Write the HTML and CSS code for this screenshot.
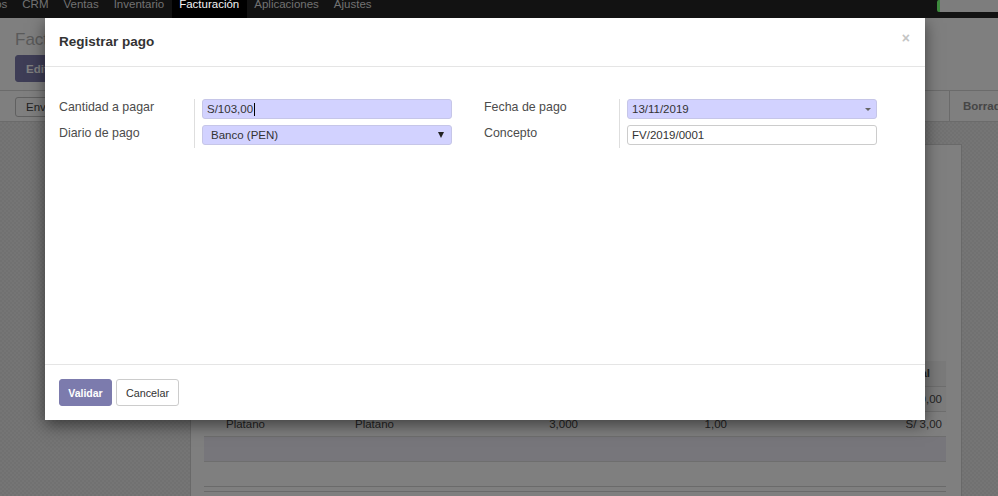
FILE: index.html
```html
<!DOCTYPE html>
<html lang="es">
<head>
<meta charset="utf-8">
<title>Registrar pago</title>
<link rel="stylesheet" href="styles.css">
</head>
<body>
<div class="app">
  <header class="navbar">
    <ul class="menu">
      <li class="menu-item">Contactos</li>
      <li class="menu-item">CRM</li>
      <li class="menu-item">Ventas</li>
      <li class="menu-item">Inventario</li>
      <li class="menu-item active">Facturación</li>
      <li class="menu-item">Aplicaciones</li>
      <li class="menu-item">Ajustes</li>
    </ul>
    <div class="systray"><div class="sys-search"></div></div>
  </header>

  <main class="action">
    <div class="control-panel">
      <div class="breadcrumb">Facturas de cliente / FV/2019/0001</div>
      <div class="cp-buttons">
        <button class="btn btn-edit">Editar</button>
        <button class="btn btn-create">Crear</button>
      </div>
    </div>
    <div class="statusbar">
      <div class="sb-buttons">
        <button class="btn btn-sm">Enviar por correo electrónico</button>
        <button class="btn btn-sm">Imprimir</button>
      </div>
      <div class="sb-status">
        <span class="status">Borrador</span>
        <span class="status">Abierto</span>
        <span class="status">Pagado</span>
      </div>
    </div>
    <div class="form-bg">
      <div class="sheet">
        <div class="sheet-top">
          <div class="sheet-title">Factura FV/2019/0001</div>
          <div class="sheet-field">Cliente: Cliente Demo</div>
          <div class="sheet-field">Fecha factura: 13/11/2019</div>
        </div>
        <table class="lines">
          <colgroup>
            <col class="c-handle"><col class="c-prod"><col class="c-desc"><col class="c-qty"><col class="c-price"><col class="c-tax"><col class="c-sub">
          </colgroup>
          <thead>
            <tr><th></th><th class="left">Producto</th><th class="left">Descripción</th><th>Cantidad</th><th>Precio unitario</th><th>Impuestos</th><th class="th-sub">Subtotal</th></tr>
          </thead>
          <tbody>
            <tr class="striped"><td></td><td>Manzana</td><td>Manzana</td><td class="num">100,000</td><td class="num">1,00</td><td></td><td class="num">S/ 100,00</td></tr>
            <tr><td></td><td>Platano</td><td>Platano</td><td class="num">3,000</td><td class="num">1,00</td><td></td><td class="num">S/ 3,00</td></tr>
            <tr class="add-row"><td colspan="7">&nbsp;</td></tr>
            <tr><td colspan="7">&nbsp;</td></tr>
          </tbody>
          <tfoot>
            <tr><td colspan="7"><div class="foot-gap"></div></td></tr>
          </tfoot>
        </table>
      </div>
    </div>
  </main>

  <div class="backdrop"></div>

  <div class="modal" role="dialog">
    <div class="modal-header">
      <h4 class="modal-title">Registrar pago</h4>
      <button class="close" aria-label="Cerrar">×</button>
    </div>
    <div class="modal-body">
      <div class="groups">
        <div class="group">
          <label class="o-label">Cantidad a pagar</label>
          <div class="o-field"><div class="o-input required">S/103,00<span class="cursor"></span></div></div>
          <label class="o-label">Diario de pago</label>
          <div class="o-field"><div class="o-input required o-select">Banco (PEN)<span class="select-arrow"></span></div></div>
        </div>
        <div class="group">
          <label class="o-label">Fecha de pago</label>
          <div class="o-field"><div class="o-input required o-date">13/11/2019<span class="date-caret"></span></div></div>
          <label class="o-label">Concepto</label>
          <div class="o-field"><div class="o-input">FV/2019/0001</div></div>
        </div>
      </div>
    </div>
    <div class="modal-footer">
      <button class="btn btn-validate">Validar</button>
      <button class="btn btn-cancel">Cancelar</button>
    </div>
  </div>
</div>
</body>
</html>
```

FILE: styles.css
```css
* { box-sizing: border-box; }

body {
  margin: 0;
  font-family: "Liberation Sans", Arial, sans-serif;
  overflow: hidden;
}

.app {
  position: relative;
  width: 998px;
  height: 496px;
  overflow: hidden;
  background: #fff;
  display: flex;
  flex-direction: column;
}

/* ---------- navbar ---------- */
.navbar {
  position: relative;
  z-index: 3;
  flex: 0 0 18px;
  height: 18px;
  background: #121212;
  display: flex;
  overflow: hidden;
}
.menu {
  display: flex;
  margin: 0 0 0 -52px;
  padding: 0;
  list-style: none;
}
.menu-item {
  padding: 0 7.5px;
  font-size: 11.5px;
  line-height: 9px;
  color: #727272;
  white-space: nowrap;
}
.menu-item.active {
  background: #000;
  color: #f2f2f2;
}
.systray { margin-left: auto; }
.sys-search {
  width: 61px;
  height: 12px;
  background: #7d7d7d;
  border-left: 3px solid #3d8a3d;
  border-radius: 2px 0 0 2px;
}

/* ---------- page under the dialog ---------- */
.action {
  flex: 1;
  display: flex;
  flex-direction: column;
  min-height: 0;
}
.control-panel {
  background: #fff;
  padding: 12px 15px 8px;
  border-bottom: 1px solid #d6d6d6;
}
.breadcrumb {
  font-size: 17px;
  line-height: 20px;
  color: #b4b4b4;
  white-space: nowrap;
}
.cp-buttons {
  margin-top: 5px;
  display: flex;
  gap: 4px;
}
.btn {
  font-family: inherit;
  border-radius: 3px;
  cursor: pointer;
  white-space: nowrap;
}
.btn-edit {
  height: 27px;
  padding: 0 10px;
  background: #7c7bad;
  border: 1px solid #7c7bad;
  color: #fff;
  font-size: 11.5px;
  font-weight: bold;
}
.btn-create {
  height: 27px;
  padding: 0 10px;
  background: #fff;
  border: 1px solid #ccc;
  color: #444;
  font-size: 11.5px;
}
.statusbar {
  display: flex;
  height: 31px;
  background: #fff;
  border-bottom: 1px solid #d6d6d6;
}
.sb-buttons {
  flex: 1;
  display: flex;
  align-items: flex-start;
  gap: 4px;
  padding: 6px 0 0 15px;
  overflow: hidden;
}
.btn-sm {
  height: 20px;
  padding: 0 10px;
  font-size: 11.5px;
  background: #fff;
  border: 1px solid #c0c0c0;
  color: #444;
}
.sb-status {
  flex: 0 0 49px;
  display: flex;
  overflow: hidden;
}
.status {
  border-left: 1px solid #d4d4d4;
  padding: 0 14px 0 13px;
  line-height: 30px;
  font-size: 11.5px;
  font-weight: bold;
  color: #8c8c8c;
  white-space: nowrap;
}
.form-bg {
  flex: 1;
  min-height: 0;
  overflow: hidden;
  padding: 22px 36px 0 190px;
  background-color: #e7e7e7;
  background-image: repeating-conic-gradient(#e2e2e2 0 25%, #ebebeb 0 50%);
  background-size: 4px 4px;
}
.sheet {
  height: 100%;
  background: #fff;
  border: 1px solid #d2d2d2;
  border-bottom: 0;
  padding: 0 15px 0 13px;
}
.sheet-top {
  height: 216px;
  padding: 20px 0 0 20px;
  color: #666;
  font-size: 11.5px;
  overflow: hidden;
}
.sheet-title {
  font-size: 20px;
  margin-bottom: 16px;
}
.sheet-field { margin-bottom: 6px; }

.lines {
  width: 100%;
  table-layout: fixed;
  border-collapse: separate;
  border-spacing: 0;
  font-size: 11.5px;
  color: #4a4a4a;
}
.c-handle { width: 18px; }
.c-prod { width: 129px; }
.c-desc { width: 129px; }
.c-qty { width: 102px; }
.c-price { width: 149px; }
.c-tax { width: 115px; }
.c-sub { width: 100px; }
.lines th {
  background: #f4f4f4;
  line-height: 25px;
  padding: 0 4px;
  text-align: right;
  font-weight: bold;
  color: #444;
  white-space: nowrap;
  overflow: hidden;
}
.lines th.left { text-align: left; }
.lines th.th-sub { padding-right: 16px; }
.lines td {
  line-height: 24px;
  padding: 0 4px;
  border-top: 1px solid #dcdcdc;
  white-space: nowrap;
  overflow: hidden;
}
.lines td.num { text-align: right; }
.lines tr.striped td { background: #f8f8f8; }
.lines tr.add-row td { background: #eeecf6; }
.lines tfoot td {
  padding: 0;
  line-height: 0;
  border-top: 1px solid #d4d4d4;
  border-bottom: 1px solid #d4d4d4;
}
.foot-gap { height: 4px; }

/* ---------- backdrop + dialog ---------- */
.backdrop {
  position: absolute;
  inset: 0;
  z-index: 1;
  background: rgba(0, 0, 0, 0.5);
}
.modal {
  position: absolute;
  z-index: 2;
  left: 45px;
  top: 18px;
  width: 880px;
  height: 402px;
  background: #fff;
  display: flex;
  flex-direction: column;
  box-shadow: 0 5px 15px rgba(0, 0, 0, 0.5);
}
.modal-header {
  flex: 0 0 49px;
  display: flex;
  align-items: center;
  padding: 0 15px 1px 14px;
  border-bottom: 1px solid #e5e5e5;
}
.modal-title {
  margin: 0;
  font-size: 13.5px;
  line-height: 16px;
  font-weight: bold;
  color: #333;
}
.close {
  margin-left: auto;
  align-self: flex-start;
  margin-top: 13px;
  padding: 0;
  border: 0;
  background: none;
  font-family: inherit;
  font-size: 14px;
  line-height: 14px;
  font-weight: bold;
  color: #c4c4c4;
  cursor: pointer;
}
.modal-body {
  flex: 1;
  padding: 32px 17px 0 14px;
}
.groups {
  display: grid;
  grid-template-columns: 393px 393px;
  column-gap: 32px;
}
.group {
  display: grid;
  grid-template-columns: 135px 258px;
}
.o-label {
  font-size: 12.4px;
  line-height: 17px;
  color: #4c4c4c;
  white-space: nowrap;
}
.o-field {
  border-left: 1px solid #dedede;
  padding: 0 0 6px 7px;
}
.o-field:last-child { padding-bottom: 3px; }
.o-input {
  position: relative;
  width: 250px;
  height: 20px;
  border: 1px solid #cccccc;
  border-radius: 3px;
  padding: 0 4px;
  font-size: 11.5px;
  line-height: 18px;
  color: #333;
  background: #fff;
  display: flex;
  align-items: center;
}
.o-input.required {
  background: #d2d2ff;
  border-color: #c6c6e8;
}
.cursor {
  display: inline-block;
  width: 1px;
  height: 13px;
  margin-left: 1px;
  background: #000;
}
.o-select {
  padding-left: 8px;
  padding-right: 7px;
}
.select-arrow {
  margin-left: auto;
  width: 0;
  height: 0;
  border-left: 3.5px solid transparent;
  border-right: 3.5px solid transparent;
  border-top: 6px solid #222;
}
.date-caret {
  margin-left: auto;
  margin-right: 1px;
  width: 0;
  height: 0;
  border-left: 3px solid transparent;
  border-right: 3px solid transparent;
  border-top: 3px solid #666;
}
.modal-footer {
  flex: 0 0 56px;
  display: flex;
  align-items: flex-start;
  gap: 4px;
  padding: 14px 14px 0;
  border-top: 1px solid #e5e5e5;
}
.btn-validate {
  width: 53px;
  height: 27px;
  padding: 0;
  background: #7c7bad;
  border: 1px solid #7c7bad;
  color: #fff;
  font-size: 10.5px;
  font-weight: bold;
}
.btn-cancel {
  width: 63px;
  height: 27px;
  padding: 0;
  background: #fff;
  border: 1px solid #cccccc;
  color: #333;
  font-size: 10.8px;
}
```
